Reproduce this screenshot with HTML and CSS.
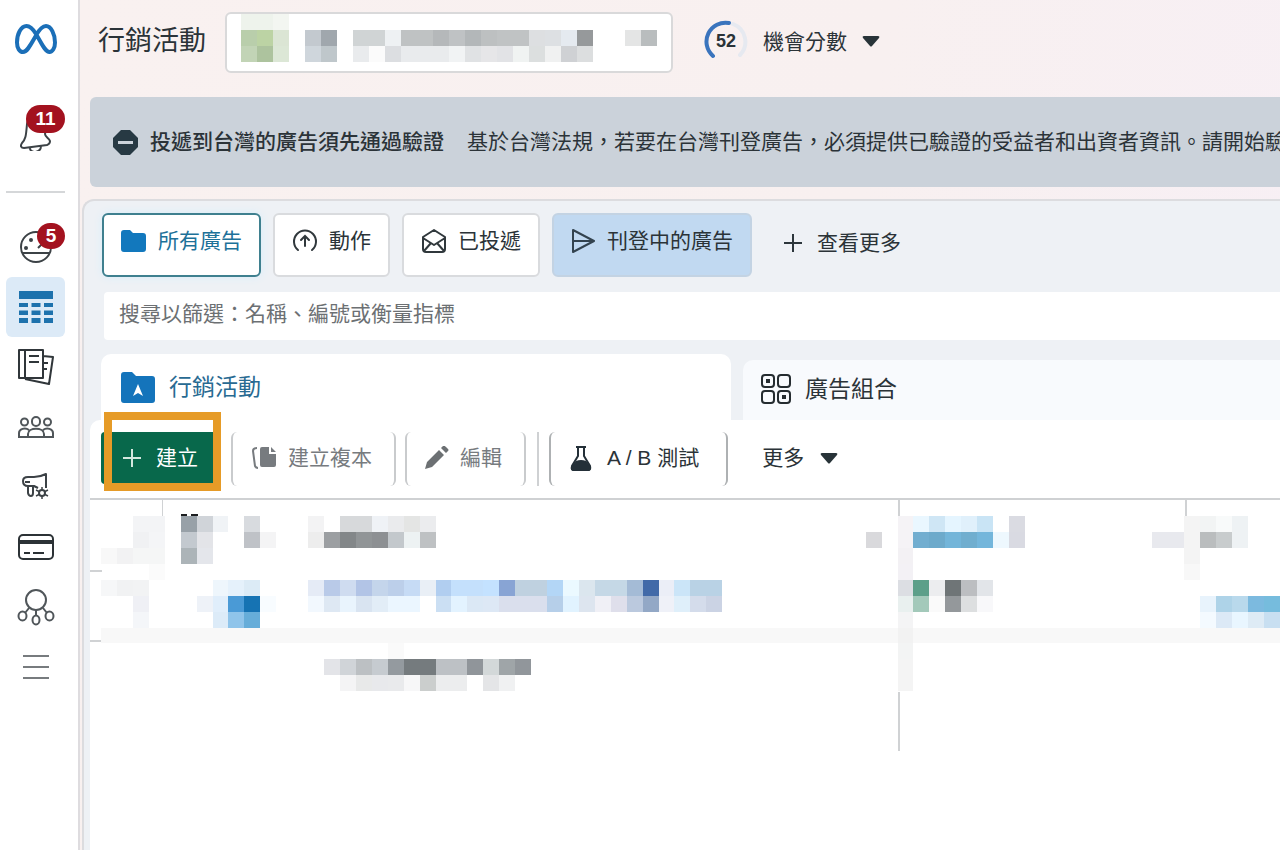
FILE: index.html
```html
<!DOCTYPE html>
<html lang="zh-Hant">
<head>
<meta charset="utf-8">
<title>行銷活動</title>
<link rel="stylesheet" href="styles.css">
</head>
<body>
<nav class="rail" aria-label="主選單">
  <a class="rail-item logo" href="#" aria-label="Meta">
    <svg width="44" height="32" viewBox="0 0 44 32" fill="none" stroke="#1b6fb8" stroke-width="4" stroke-linecap="round"><path d="M22 11C19 6 16 3 12.500 3C7 3 3 11 3 19.500C3 25 5.500 29 9 29C13 29 16 23 22 12.500C25 7 28 3 32 3C37 3 41 11 41 19.500C41 25 38.500 29 35.500 29C31 29 28 21 22 11Z"/></svg>
  </a>
  <a class="rail-item bell" href="#" aria-label="通知">
    <svg width="36" height="40" viewBox="0 0 36 40" fill="none" stroke="#3c4246" stroke-width="2" stroke-linejoin="round"><path d="M9 13c1-6 6-9 12-7c6 2 8 7 7 12l-1 5c0 3 4 4 5 7c0 3-1 3-3 4L6 37c-3 0-4-2-2-5c4-4 4-8 5-19zM12 37c0 6 11 5 11-2"/></svg>
    <span class="badge badge-wide">11</span>
  </a>
  <hr class="rail-line">
  <a class="rail-item" href="#" aria-label="帳號總覽">
    <svg width="36" height="36" viewBox="0 0 36 36" fill="none" stroke="#3c4246" stroke-width="2"><circle cx="18" cy="18" r="15"/><path d="M4 24h28M20 19l5-5"/><g fill="#3c4246" stroke="none"><circle cx="13" cy="11" r="2"/><circle cx="8" cy="19" r="2"/></g></svg>
    <span class="badge badge-small">5</span>
  </a>
  <a class="rail-item active" href="#" aria-label="行銷活動" aria-current="page">
    <svg width="34" height="32" viewBox="0 0 34 32" fill="#1d72ad"><path d="M0 0h34v8H0zM0 12h9v4H0zM12.500 12h9v4h-9zM25 12h9v4h-9zM0 19.500h9v4.500H0zM12.500 19.500h9v4.500h-9zM25 19.500h9v4.500h-9zM0 27h9v5H0zM12.500 27h9v5h-9zM25 27h9v5h-9z"/></svg>
  </a>
  <a class="rail-item" href="#" aria-label="廣告報告">
    <svg width="38" height="38" viewBox="0 0 38 38" fill="none" stroke="#30363a" stroke-width="2" stroke-linejoin="round"><path d="M2 2h24v28H2zM8 2v28M12 8h10M12 14h10M26 8l10 1l-4 27l-24-5M27 15h4M27 21h3"/></svg>
  </a>
  <a class="rail-item" href="#" aria-label="廣告受眾">
    <svg width="36" height="24" viewBox="0 0 36 24" fill="none" stroke="#50565a" stroke-width="2"><rect x="14" y="2" width="8" height="9" rx="4"/><circle cx="6.500" cy="7" r="3.500"/><circle cx="29.500" cy="7" r="3.500"/><path d="M10 22v-3c0-7 16-7 16 0v3zM10 22H1v-4c0-4 6-6 10-3M26 22h9v-4c0-4-6-6-10-3"/></svg>
  </a>
  <a class="rail-item" href="#" aria-label="廣告設定">
    <svg width="32" height="32" viewBox="0 0 32 32" fill="none" stroke="#3c4246" stroke-width="2" stroke-linejoin="round"><path d="M3 10c0-3 2-4 5-4h6c5 0 8-1 12-3v14M3 10c0 4 2 5 5 5h6l4 2M5 11h5M8 15v7c1 4 5 4 5 0v-6"/><path d="M22 16v12M16 19l12 6M28 19l-12 6" stroke-width="1.500"/><circle cx="22" cy="22" r="3" fill="#fff"/></svg>
  </a>
  <a class="rail-item" href="#" aria-label="帳單">
    <svg width="36" height="26" viewBox="0 0 36 26" fill="none" stroke="#2c3236" stroke-width="2"><rect x="1" y="1" width="34" height="24" rx="4"/><path d="M1 8h34" stroke-width="4"/><path d="M6 19h6M15 19h11"/></svg>
  </a>
  <a class="rail-item" href="#" aria-label="事件管理工具">
    <svg width="38" height="38" viewBox="0 0 38 38" fill="none" stroke="#50565a" stroke-width="2"><circle cx="19" cy="12" r="10"/><ellipse cx="5.500" cy="28" rx="4" ry="4.500"/><ellipse cx="19" cy="32" rx="3.500" ry="4.500"/><ellipse cx="32.500" cy="28" rx="4" ry="4.500"/><path d="M12 20l-4 5M19 22v6M26 20l4 5"/></svg>
  </a>
  <a class="rail-item" href="#" aria-label="所有工具">
    <svg width="28" height="26" viewBox="0 0 28 26" stroke="#777b7e" stroke-width="2"><path d="M1 2h26M1 13h26M1 24h26"/></svg>
  </a>
</nav>
<main class="main">
  <header class="top">
    <h1 class="title">行銷活動</h1>
    <button class="account" type="button" aria-label="選擇廣告帳號">
      <svg id="account-mosaic" width="416" height="48" viewBox="0 0 26 3" preserveAspectRatio="none" shape-rendering="crispEdges"></svg>
    </button>
    <button class="score" type="button">
      <span class="ring">
        <svg width="44" height="44" viewBox="0 0 44 44" fill="none" stroke-width="4" stroke-linecap="round"><path d="M29 4A19 19 0 0 1 36 35" stroke="#e6e9f0"/><path d="M9 36A19 19 0 0 1 25 3" stroke="#3a74bd"/></svg>
        <strong class="ring-value">52</strong>
      </span>
      <span>機會分數</span>
      <svg class="caret" width="18" height="11" viewBox="0 0 18 11" fill="#283338"><path d="M2 0h14q2 0 1 2L10 10q-1 1-2 0L1 2Q0 0 2 0z"/></svg>
    </button>
  </header>
  <section class="notice">
    <svg width="25" height="25" viewBox="0 0 25 25"><path d="M8 0h9l8 8v9l-8 8H8l-8-8V8z" fill="#273943"/><path d="M5 11h15v3H5z" fill="#cbd2da"/></svg>
    <strong class="notice-title">投遞到台灣的廣告須先通過驗證</strong>
    <span>基於台灣法規，若要在台灣刊登廣告，必須提供已驗證的受益者和出資者資訊。請開始驗</span>
  </section>
  <section class="panel">
    <div class="filters">
      <button class="filter selected" type="button"><svg width="25" height="22" viewBox="0 0 25 22" fill="#1278bd"><path d="M3 0h6l3 3h10q3 0 3 3v13q0 3-3 3H3q-3 0-3-3V3q0-3 3-3z"/></svg>所有廣告</button>
      <button class="filter" type="button"><svg width="26" height="24" viewBox="0 0 26 24" fill="none" stroke="#30383c" stroke-width="2" stroke-linecap="round"><path d="M6 21a11 11 0 1 1 14 0M13 17V8M9 11l4-4l4 4"/></svg>動作</button>
      <button class="filter" type="button"><svg width="26" height="26" viewBox="0 0 26 26" fill="none" stroke="#30383c" stroke-width="2" stroke-linejoin="round"><path d="M2 9l11-7l11 7v12q0 3-3 3H5q-3 0-3-3zM2 10l11 7l11-7M3 23l7-8M23 23l-7-8"/></svg>已投遞</button>
      <button class="filter live" type="button"><svg width="25" height="24" viewBox="0 0 25 24" fill="none" stroke="#33434f" stroke-width="2" stroke-linejoin="round"><path d="M2 1l21 11L2 23V1zM3 12h20"/></svg>刊登中的廣告</button>
      <button class="see-more" type="button"><svg width="18" height="18" viewBox="0 0 18 18" stroke="#2c363b" stroke-width="2"><path d="M9 0v18M0 9h18"/></svg>查看更多</button>
    </div>
    <input class="search" type="text" aria-label="搜尋以篩選" placeholder="搜尋以篩選：名稱、編號或衡量指標">
    <div class="tabs" role="tablist">
      <button class="tab current" role="tab" aria-selected="true" type="button"><svg width="34" height="31" viewBox="0 0 34 31"><path d="M3 0h8l4 4h16q3 0 3 3v21q0 3-3 3H3q-3 0-3-3V3q0-3 3-3z" fill="#1474bb"/><path d="M17 12l5 12l-5-3l-5 3z" fill="#fff"/></svg>行銷活動</button>
      <button class="tab" role="tab" aria-selected="false" type="button"><svg width="30" height="30" viewBox="0 0 30 30" fill="none" stroke="#252c30" stroke-width="2"><rect x="1" y="1" width="12" height="12" rx="3"/><rect x="17" y="1" width="12" height="12" rx="3"/><rect x="1" y="17" width="12" height="12" rx="3"/><rect x="17" y="17" width="12" height="12" rx="3"/><path d="M5 5h4v4H5zM21 21h4v4h-4z" fill="#252c30" stroke="none"/></svg>廣告組合</button>
    </div>
    <div class="sheet">
      <div class="toolbar">
        <div class="create-wrap">
          <button class="create" type="button"><svg width="18" height="18" viewBox="0 0 18 18" stroke="#d5e8df" stroke-width="2"><path d="M9 0v18M0 9h18"/></svg>建立</button>
          <span class="marker"></span>
        </div>
        <button class="tool duplicate" type="button" disabled><svg width="26" height="24" viewBox="0 0 26 24"><path d="M6 2Q2 2 2 5l2 15q1 2 3 2" fill="none" stroke="#777b7f" stroke-width="2"/><path d="M11 1h7v7h7v11q0 2-2 2H11q-2 0-2-2V3q0-2 2-2zM20 1l5 5h-5z" fill="#777b7f"/></svg>建立複本</button>
        <button class="tool edit" type="button" disabled><svg width="24" height="24" viewBox="0 0 24 24" fill="#6c7073"><path d="M0 23l2-7L14 4l5 5L7 21zM16 2l2-2q1-1 3 1l2 2q1 1 0 2l-2 2z"/></svg>編輯</button>
        <span class="separator"></span>
        <button class="tool test" type="button"><svg width="22" height="25" viewBox="0 0 22 25"><path d="M6 1h10M8 1v9L2 20q-1 4 2 4h14q3 0 2-4L14 10V1" fill="none" stroke="#243038" stroke-width="2"/><path d="M6 15q5-2 10 0l5 6q0 4-3 4H4q-4 0-3-4z" fill="#243038"/></svg>A / B 測試</button>
        <button class="more" type="button">更多<svg width="18" height="11" viewBox="0 0 18 11" fill="#283338"><path d="M2 0h14q2 0 1 2L10 10q-1 1-2 0L1 2Q0 0 2 0z"/></svg></button>
      </div>
      <div class="grid">
        <svg width="1190" height="260" viewBox="0 0 1190 260" role="img" aria-label="行銷活動列表">
          <g fill="#d0d2d4"><path d="M72 0h1v16h-1zM808 0h2v16h-2zM1095 0h2v16h-2zM808 192h2v59h-2zM0 70h12v2H0zM0 140h12v2H0z"/></g>
          <path d="M91 14h6v2h-6zM101 14h7v2h-7z" fill="#1c1e20"/>
          <g id="grid-mosaic" transform="translate(11 16) scale(15.930)" shape-rendering="crispEdges"></g>
        </svg>
      </div>
    </div>
  </section>
</main>
<script src="mosaic.js"></script>
</body>
</html>
```
FILE: styles.css
```css
* { box-sizing: border-box; }
body {
  margin: 0;
  min-height: 100vh;
  display: flex;
  overflow: hidden;
  background: #fff;
  color: #2b3338;
  font: 21px/30px "Liberation Sans", "Noto Sans CJK TC", sans-serif;
}
button {
  margin: 0;
  padding: 0;
  border: 0;
  background: none;
  color: inherit;
  font: inherit;
  white-space: nowrap;
  display: flex;
  align-items: center;
}
svg { flex: none; display: block; }

.rail {
  flex: none;
  width: 80px;
  padding: 9px 13px 0 6px;
  border-right: 2px solid #dedcdf;
  background: #fff;
}
.rail-item {
  position: relative;
  height: 60px;
  display: flex;
  align-items: center;
  justify-content: center;
  border-radius: 6px;
}
.bell { margin-top: 32px; }
.rail-line { margin: 30px 0 24px; border: 0; border-top: 2px solid #d5d7d9; }
.active { background: #dceaf7; }
.badge {
  position: absolute;
  right: 0;
  border-radius: 14px;
  background: #a3121f;
  color: #fff;
  font-size: 19px;
  font-weight: 700;
  text-align: center;
}
.badge-wide { top: 4px; width: 39px; line-height: 28px; }
.badge-small { top: 6px; width: 28px; line-height: 26px; }

.main {
  flex: 1;
  min-width: 0;
  display: flex;
  flex-direction: column;
  background: linear-gradient(100deg, #f9f1f0 0, #f8f0f0 60%, #f7eff5 100%);
}
.top {
  display: flex;
  align-items: center;
  gap: 19px;
  padding: 12px 18px 24px;
}
.title { margin: 0 0 4px; font-size: 27px; line-height: 36px; font-weight: 400; white-space: nowrap; }
.account {
  flex: 0 1 448px;
  height: 61px;
  padding: 0 14px;
  border: 2px solid #d9d9da;
  border-radius: 6px;
  background: #fff;
  align-items: flex-start;
  overflow: hidden;
}
.score { margin-left: 12px; padding-bottom: 2px; gap: 15px; }
.ring { position: relative; display: block; }
.ring-value {
  position: absolute;
  inset: 0;
  text-align: center;
  font-size: 18px;
  line-height: 42px;
}

.notice {
  display: flex;
  align-items: center;
  height: 90px;
  margin-left: 10px;
  padding-left: 23px;
  border-radius: 6px 0 0 6px;
  background: #cbd2da;
  white-space: nowrap;
  overflow: hidden;
}
.notice-title { margin: 0 23px 0 12px; font-weight: 500; }

.panel {
  flex: 1;
  display: flex;
  flex-direction: column;
  margin: 12px 0 0 2px;
  border: 2px solid #dcdcdf;
  border-width: 2px 0 0 2px;
  border-radius: 12px 0 0 0;
  background: #eef1f5;
}
.filters { display: flex; gap: 12px; padding: 12px 0 15px 18px; }
.filter {
  height: 64px;
  gap: 11px;
  padding: 0 17px 8px;
  border: 2px solid #d9dbde;
  border-radius: 6px;
  background: #fff;
}
.selected { gap: 12px; border-color: #3f808f; color: #1d7199; box-shadow: 0 0 8px #d8eefa; }
.live { background: #c1d9f1; border-color: #c3d3e3; }
.see-more { gap: 15px; margin-left: 20px; padding-bottom: 4px; }
.search {
  height: 48px;
  margin: 0 0 0 20px;
  padding: 0 15px 4px;
  border: 0;
  border-radius: 4px 0 0 4px;
  background: #fff;
  font: inherit;
}
.search::placeholder { color: #6c7073; opacity: 1; }

.tabs { display: flex; gap: 12px; align-items: flex-end; padding: 14px 0 0 17px; }
.tab {
  flex: 1;
  height: 60px;
  padding: 0 18px 2px;
  gap: 14px;
  border-radius: 10px 0 0 0;
  background: #f8fafd;
  font-size: 23px;
}
.current {
  flex: 0 1 630px;
  height: 66px;
  padding: 0 20px;
  border-radius: 10px 10px 0 0;
  background: #fff;
  color: #286a92;
}
.sheet { flex: 1; margin-left: 6px; border-radius: 10px 0 0 0; background: #fff; }
.toolbar {
  display: flex;
  align-items: flex-start;
  height: 80px;
  padding: 12px 0 0 11px;
  border-bottom: 2px solid #cfd1d3;
}
.create-wrap { position: relative; margin-right: 18px; }
.create { height: 52px; width: 112px; padding-left: 22px; gap: 15px; border-radius: 4px 0 0 4px; background: #08684b; color: #fff; }
.marker {
  position: absolute;
  inset: -20px -8px -7px 3px;
  border: 8px solid #e69b27;
  pointer-events: none;
}
.tool {
  height: 54px;
  gap: 11px;
  padding-bottom: 2px;
  border: 2px solid #c9cbcd;
  border-width: 0 2px;
  border-radius: 6px;
}
.tool:disabled { color: #777b7f; }
.duplicate { padding-left: 18px; padding-right: 22px; margin-right: 9px; }
.edit { padding-left: 18px; padding-right: 22px; margin-right: 11px; }
.separator { width: 2px; height: 54px; margin-right: 10px; background: #cfd1d3; }
.test { gap: 15px; padding-left: 19px; padding-right: 27px; border-color: #aeb1b3; }
.more { height: 52px; gap: 16px; margin-left: 34px; }
.grid { overflow: hidden; }
```
FILE: mosaic.js
```js
// Each run is [row, first column, colours of the cells that follow].
const accountRuns = [
  [0, 0, "eef3ec eef3ec f3f6f1"],
  [1, 0, "b9ceab bcd3a4 dbe5d4"],
  [1, 4, "c3c9cf a0a7ad"],
  [1, 7, "d0d4d5 d0d4d5 eef1f3 bfc2c3 bfc2c3 b5b8ba bfc2c4 b3b7b9 bdc0c1 c0c3c4 c0c3c4 dddfe1 dde0e3 e5eaf0 96999b"],
  [1, 24, "e4e5e5 b9bdbe"],
  [2, 0, "c2d4b6 adc39e dce7d6"],
  [2, 4, "cfd6dc bfc7cb"],
  [2, 7, "e9ebed fbfbfb dcdee1 e9ebed e9ebed e9ebed f1f3f4 e0e2e4 e6e6e8 e2e3e6 f0f3f2 dcdfdf f0f1f1 cfd1d4 dcdedf"]
];
const gridRuns = [
  [0, 2, "f3f4f6 f3f4f6"],
  [0, 5, "98a1a8 d0d4d9 f0f3f6"],
  [0, 9, "d8dbdf"],
  [0, 13, "f3f3f4"],
  [0, 15, "d7d9db d7d9db eff2f6 eaebed e4e5e4 ebecee"],
  [0, 50, "f5f3f6 eaf7ff cfe6f5 e5f5ff e0f0fb c9e4f5"],
  [0, 57, "dadbe2"],
  [0, 68, "f4f4f4 f2f4f4 f8fafa eef2f4"],
  [1, 2, "f0f1f3 f4f5f7"],
  [1, 5, "c3c9cf e3e4e8"],
  [1, 9, "bfc2c7 f4f4f5"],
  [1, 13, "ededed 9c9fa2 838789 919597 8d9093 c3c8cc edf2f3 bec1c3"],
  [1, 48, "d9d9dc"],
  [1, 50, "f5f3f6 72aed0 6daacb 73b5d9 70aecf 74b6db eef8fe d9dae2"],
  [1, 66, "e8e9ee e8e9ee f4f4f4 babdbe c8cccd eef2f4"],
  [2, 0, "f8f8f8 f2f2f3 f5f6f6 f5f6f6"],
  [2, 5, "acb4b8 e4e6eb"],
  [2, 50, "f3f1f4"],
  [2, 68, "f4f4f4"],
  [3, 3, "fbfbfb"],
  [3, 50, "f3f1f5"],
  [3, 68, "f8f8f8"],
  [4, 0, "f6f7f8 f1f2f3 f2f3f4"],
  [4, 7, "eef6fc e5f1fb dcebf6"],
  [4, 13, "e5ebf6 b9cae8 cfdcf0 b2c4e6 c4d5eb bccfea c6dbf5 e9eff6 b1cef0 c4e0fc c4e0fc c4e2ff 88a4d4 bfd1e0 bfd1e0 b3d6f6 ebf9ff dbe6ee c5d8e6 c5d8e6 a4bbd6 426aa8 ebeef7 cbe5f8 b9d2e5 b9d2e5"],
  [4, 50, "dcdee3 5c9f89 ecedef 6f7577 bcbec1 e2e5e9"],
  [5, 2, "eff0f5"],
  [5, 6, "eef2f8 e0eefb 4a9ad6 1673b3 f8fcff"],
  [5, 13, "f2f8fe dee8f3 e9f4fd d9e4f1 e2edf7 ebf6ff ebf6ff ffffff cbdff3 e3f3ff dbe8f5 dde8f5 dadfed dadfed dadfed b6cfe9 e1f3ff dde5ef f0f0f6 dfdfeb bbc9de 93a8c6 eff1f8 dfeffa d4dceb cbd3e4"],
  [5, 50, "e9f0ef a3c9ba fafafa 94989b dddfe0 f8f8fa"],
  [5, 69, "e8f3fc aed3e8 b9d9ec 7cbadf 76bcdd"],
  [6, 2, "f4f6f9"],
  [6, 7, "dcebf8 8fc4ea 66add9"],
  [6, 50, "f4f4f5"],
  [6, 69, "f4faff dce9f6 e9f6ff deebf5 c8dff1"],
  [7, 0, Array(50).fill("f8f8f8").join(" ")],
  [7, 50, "f2f2f2"],
  [7, 51, Array(23).fill("f8f8f8").join(" ")],
  [8, 18, "fafafa"],
  [8, 50, "f3f4f4"],
  [9, 14, "e3e4e8 d0d4d8 bcc0c3 c6cbd0 949a9f 757b7e 757b7e bdc1c5 bdc1c5 90959a d3d8d9 9fa5a8 91969b"],
  [9, 50, "f4f4f4"],
  [10, 15, "f4f4f5 e8e9e9 e8e9ec e9eaec f7f7f8 cbcecd ecedee ecedee"],
  [10, 24, "e4e5e7 f0f1f2"],
  [10, 50, "f4f4f4"]
];
function drawMosaic(target, runs) {
  for (const [row, start, colours] of runs) {
    colours.split(" ").forEach((colour, i) => {
      const cell = document.createElementNS("http://www.w3.org/2000/svg", "rect");
      cell.setAttribute("x", start + i);
      cell.setAttribute("y", row);
      cell.setAttribute("width", 1);
      cell.setAttribute("height", 1);
      cell.setAttribute("fill", "#" + colour);
      target.append(cell);
    });
  }
}
drawMosaic(document.getElementById("account-mosaic"), accountRuns);
drawMosaic(document.getElementById("grid-mosaic"), gridRuns);
```
